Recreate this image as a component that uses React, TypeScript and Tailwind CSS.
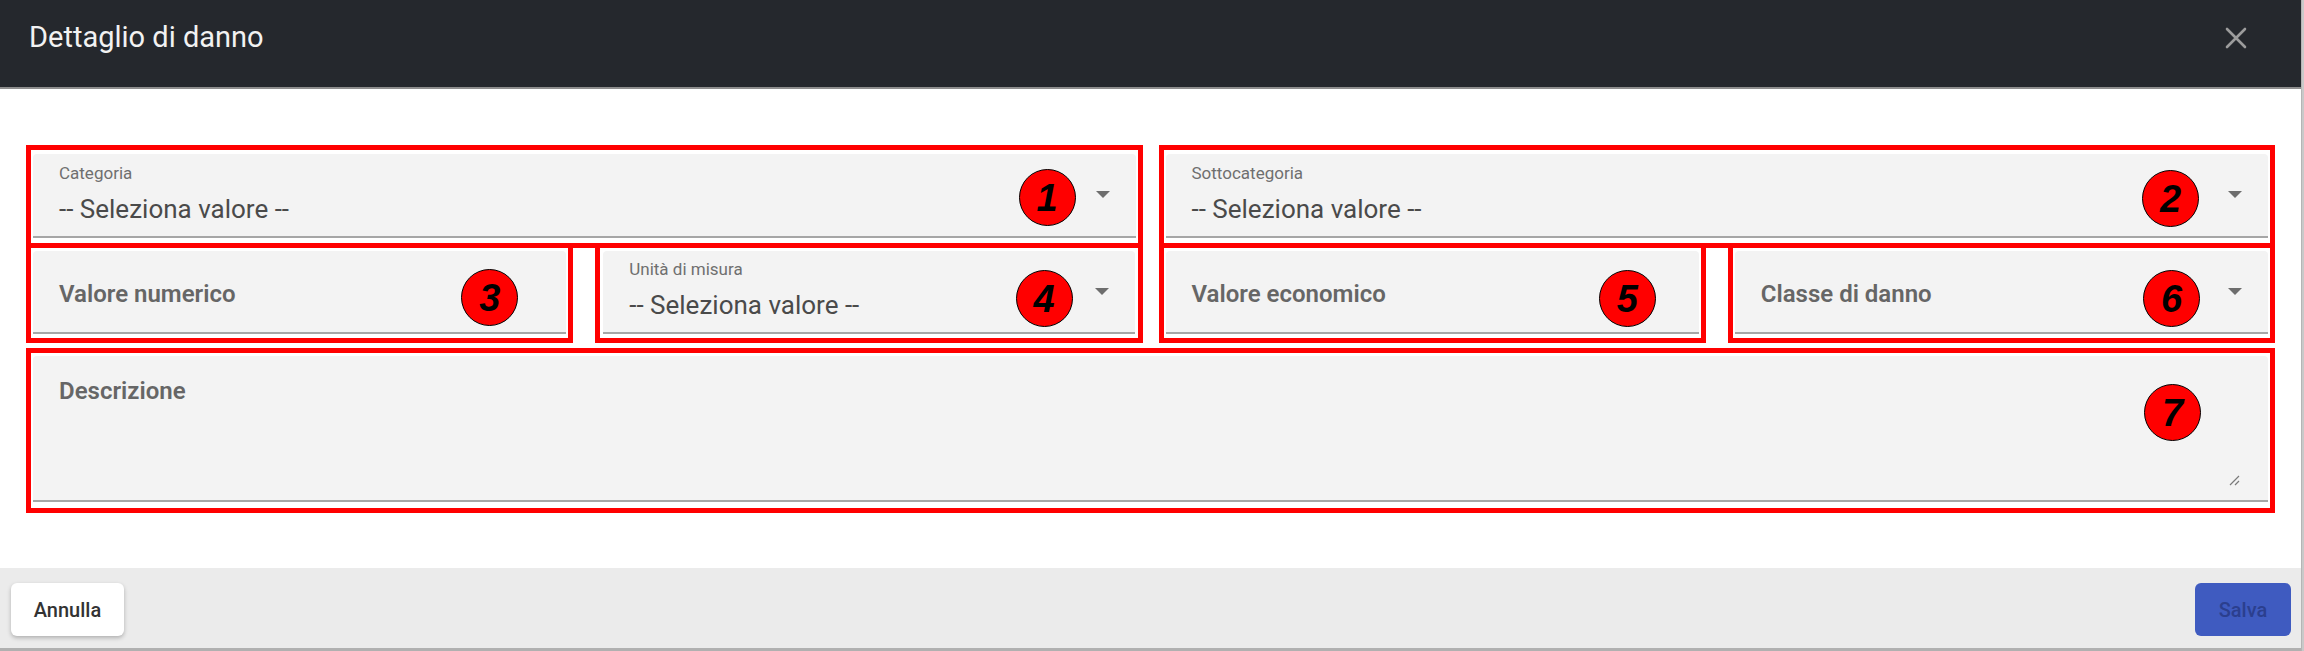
import type { ReactNode } from "react";

const Marker = ({ n, className }: { n: number; className: string }) => (
  <span
    className={`absolute w-[57px] h-[57px] rounded-full bg-[#ff0000] border-[1.5px] border-black flex items-center justify-center text-black text-[38px] leading-none font-bold italic font-['Liberation_Sans',Arial,sans-serif] ${className}`}
  >
    {n}
  </span>
);

const RedBox = ({
  children,
  className = "",
}: {
  children: ReactNode;
  className?: string;
}) => (
  <div className={`relative border-[5px] border-[#ff0000] bg-white ${className}`}>
    {children}
  </div>
);

const Caret = () => (
  <svg width="14" height="8" viewBox="0 0 14 8" className="shrink-0">
    <path d="M0 0h14L7 7z" fill="#6d6d6d" />
  </svg>
);

const SelectField = ({
  label,
  height,
  padTop,
}: {
  label: string;
  height: string;
  padTop: string;
}) => (
  <div
    className={`${height} bg-[#f3f3f3] rounded-t-[4px] border-b-2 border-[#a6a6a6] flex items-center justify-between pl-[26px] pr-[26px]`}
  >
    <div className={`flex flex-col self-start ${padTop}`}>
      <span className="text-[17px] leading-none text-[#6f6f6f]">{label}</span>
      <span className="mt-[14px] text-[26px] leading-none text-[#4a4a4a]">
        -- Seleziona valore --
      </span>
    </div>
    <Caret />
  </div>
);

const InputField = ({ label, withCaret }: { label: string; withCaret?: boolean }) => (
  <div className="h-[83px] bg-[#f3f3f3] rounded-t-[4px] border-b-2 border-[#a6a6a6] flex items-center justify-between pl-[26px] pr-[26px] pt-[4px]">
    <span className="text-[24px] leading-none font-semibold text-[#666]">
      {label}
    </span>
    {withCaret && (
      <span className="-mt-[4px]">
        <Caret />
      </span>
    )}
  </div>
);

export default function App() {
  return (
    <div className="w-[2304px] h-[651px] bg-[#c9c9c9] flex font-['Roboto','Liberation_Sans',sans-serif]">
      <div className="w-[2302px] h-full flex flex-col bg-white border-r border-[#b5b5b5]">
        {/* Header */}
        <div className="h-[89px] shrink-0 bg-[#25282d] border-b-2 border-[#8e8e8e] flex items-start justify-between pl-[29px] pr-[54px] pt-[23px]">
          <h1 className="text-[29px] leading-none font-normal text-[#f2f2f2]">
            Dettaglio di danno
          </h1>
          <svg width="22" height="22" viewBox="0 0 22 22" className="mt-[4px]">
            <path
              d="M2 2L20 20M20 2L2 20"
              stroke="#9c9c9c"
              strokeWidth="2.6"
              strokeLinecap="round"
            />
          </svg>
        </div>

        {/* Body */}
        <div className="flex-1 px-[26px] pt-[56px] flex flex-col">
          <div className="grid grid-cols-2 gap-x-[16px]">
            <RedBox className="px-[2px] pt-[4px] pb-[5px]">
              <SelectField label="Categoria" height="h-[84px]" padTop="pt-[11px]" />
              <Marker n={1} className="right-[62px] top-[19px]" />
            </RedBox>
            <RedBox className="px-[2px] pt-[4px] pb-[5px]">
              <SelectField label="Sottocategoria" height="h-[84px]" padTop="pt-[11px]" />
              <Marker n={2} className="right-[71px] top-[20px]" />
            </RedBox>
          </div>

          <div className="grid grid-cols-2 gap-x-[16px] -mt-[5px]">
            <div className="grid grid-cols-2 gap-x-[22px]">
              <RedBox className="px-[2px] pt-[3px] pb-[4px]">
                <InputField label="Valore numerico" />
                <Marker n={3} className="right-[50px] top-[21px]" />
              </RedBox>
              <RedBox className="px-[3px] pt-[3px] pb-[4px]">
                <SelectField label="Unità di misura" height="h-[83px]" padTop="pt-[10px]" />
                <Marker n={4} className="right-[65px] top-[22px]" />
              </RedBox>
            </div>
            <div className="grid grid-cols-2 gap-x-[22px]">
              <RedBox className="px-[2px] pt-[3px] pb-[4px]">
                <InputField label="Valore economico" />
                <Marker n={5} className="right-[45px] top-[22px]" />
              </RedBox>
              <RedBox className="px-[2px] pt-[3px] pb-[4px]">
                <InputField label="Classe di danno" withCaret />
                <Marker n={6} className="right-[70px] top-[22px]" />
              </RedBox>
            </div>
          </div>

          <RedBox className="mt-[5px] px-[2px] pt-[3px] pb-[6px]">
            <div className="h-[146px] bg-[#f3f3f3] rounded-t-[4px] border-b-2 border-[#a6a6a6] flex flex-col pl-[26px] pr-[28px] pt-[23px] pb-[14px]">
              <span className="text-[24px] leading-none font-semibold text-[#666]">
                Descrizione
              </span>
              <div className="flex-1" />
              <div className="flex justify-end">
                <svg width="11" height="11" viewBox="0 0 11 11">
                  <path d="M10 1L1 10M10 6L6 10" stroke="#7a7a7a" strokeWidth="1.2" />
                </svg>
              </div>
            </div>
            <Marker n={7} className="right-[69px] top-[31px]" />
          </RedBox>
        </div>

        {/* Footer */}
        <div className="h-[83px] shrink-0 bg-[#ebebeb] border-b-[3px] border-[#b0b0b0] flex items-start justify-between px-[11px] pt-[15px]">
          <button
            type="button"
            className="w-[113px] h-[53px] bg-white rounded-[6px] shadow-[0_2px_4px_rgba(0,0,0,0.25)] text-[20px] font-medium text-[#333]"
          >
            Annulla
          </button>
          <button
            type="button"
            className="w-[96px] h-[53px] bg-[#3f5bc0] rounded-[6px] text-[20px] font-medium text-[#2b3f8e] -mr-[1px]"
          >
            Salva
          </button>
        </div>
      </div>
    </div>
  );
}
